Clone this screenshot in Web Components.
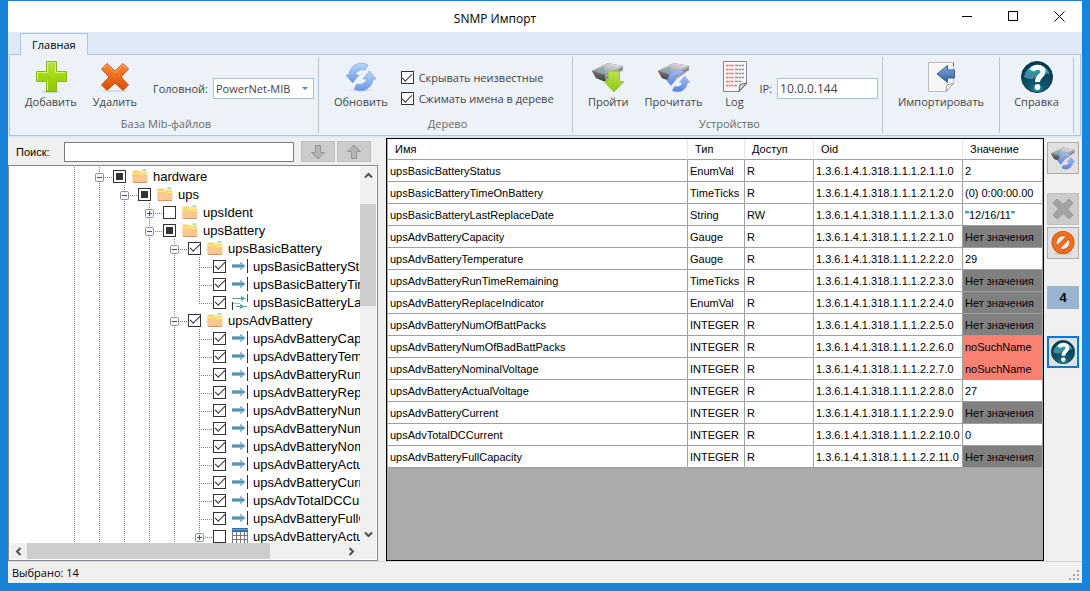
<!DOCTYPE html>
<html lang="ru">
<head>
<meta charset="utf-8">
<title>SNMP Импорт</title>
<style>
  html, body {
    height: 100%;
    margin: 0;
  }

  body {
    --ui-font: "Open Sans", "Noto Sans", sans-serif;
    --classic-font: "Liberation Sans", Arial, sans-serif;
    --accent: #1883d7;
    --face: #f0f0f0;
    --ribbon-strip: #dfe9f5;
    --ribbon-panel: #edf2f9;
    --ribbon-line: #b1c5de;
    overflow: hidden;
    font: 11px/16px var(--ui-font);
    color: #000;
  }
</style>
</head>
<body>
<app-window caption="SNMP Импорт">
  <ribbon-bar slot="ribbon" tab="Главная">
    <ribbon-group caption="База Mib-файлов" style="--group-width: 309px">
      <ribbon-button icon="plus">Добавить</ribbon-button>
      <ribbon-button icon="cross">Удалить</ribbon-button>
      <ribbon-select label="Головной:" value="PowerNet-MIB"></ribbon-select>
    </ribbon-group>
    <ribbon-group caption="Дерево" style="--group-width: 254px">
      <ribbon-button icon="refresh">Обновить</ribbon-button>
      <ribbon-checks items="Скрывать неизвестные|Сжимать имена в дереве"></ribbon-checks>
    </ribbon-group>
    <ribbon-group caption="Устройство" style="--group-width: 310px">
      <ribbon-button icon="walk">Пройти</ribbon-button>
      <ribbon-button icon="read">Прочитать</ribbon-button>
      <ribbon-button icon="log">Log</ribbon-button>
      <ribbon-text label="IP:" value="10.0.0.144"></ribbon-text>
    </ribbon-group>
    <ribbon-group centered style="--group-width: 117px">
      <ribbon-button icon="import">Импортировать</ribbon-button>
    </ribbon-group>
    <ribbon-group centered style="--group-width: 74px">
      <ribbon-button icon="help">Справка</ribbon-button>
    </ribbon-group>
  </ribbon-bar>
  <mib-browser slot="left"></mib-browser>
  <oid-grid slot="center"></oid-grid>
  <side-tools slot="right" count="4"></side-tools>
  <status-bar slot="status">Выбрано: 14</status-bar>
</app-window>

<script>
const DEVICE = `
  <path d="M0 10 L16 2 L31 5 L31 9 L14 21 L4 17 Z" fill="#777"/>
  <path d="M0 10 L16 2 L31 5 L13 14 Z" fill="url(#top)"/>
  <path d="M0 10 L13 14 L14 21 L4 17 Z" fill="url(#side)"/>
  <path d="M13 14 L31 5 L31 9 L14 21 Z" fill="#a9a9a9"/>
  <path d="M14 17 L31 7.500" stroke="#666" stroke-width="1"/>
  <path d="M7 10 L12 7 M10 11.500 L13 9.500" stroke="#4fb9c8" stroke-width="1.500"/>
`;

const DEVICE_DEFS = `
  <linearGradient id="top" x1="0" y1="1" x2="1" y2="0">
    <stop offset="0" stop-color="#7b7b7b"/><stop offset=".4" stop-color="#b0b0b0"/><stop offset="1" stop-color="#ececec"/>
  </linearGradient>
  <linearGradient id="side" x1="0" y1="0" x2="0" y2="1">
    <stop offset="0" stop-color="#777"/><stop offset="1" stop-color="#3c3c3c"/>
  </linearGradient>
`;

const ARROWS = `
  <path d="M23 4 A12.500 12.500 0 0 0 4 14 H1 L7.500 22 L14 14 H10 A8 8 0 0 1 20 9 Z" fill="url(#blue)" stroke="#6d97de" stroke-width=".6"/>
  <path d="M9 28 A12.500 12.500 0 0 0 28 18 H31 L24.500 10 L18 18 H22 A8 8 0 0 1 12 23 Z" fill="url(#blue)" stroke="#6d97de" stroke-width=".6"/>
`;

const BLUE = `
  <linearGradient id="blue" x1="0" y1="0" x2="0" y2="1">
    <stop offset="0" stop-color="#bcd8fb"/><stop offset="1" stop-color="#6b95e6"/>
  </linearGradient>
`;

const VIOLET = BLUE.replace('#bcd8fb', '#a9bdf5').replace('#6b95e6', '#5c7fe0');

const ICONS = {
  plus: [32, 32, `
    <defs><linearGradient id="g" x1="0" y1="0" x2="0" y2="1">
      <stop offset="0" stop-color="#b7e34a"/><stop offset=".5" stop-color="#a3d80d"/><stop offset="1" stop-color="#8cc60a"/>
    </linearGradient></defs>
    <ellipse cx="16" cy="31" rx="9" ry="1" fill="#c3ccd4"/>
    <path d="M11.500 .5 H21.500 V10.500 H31.500 V20.500 H21.500 V30.500 H11.500 V20.500 H1.500 V10.500 H11.500 Z" fill="url(#g)" stroke="#84b51a"/>
    <path d="M12.500 20 V29.500 M12.500 10.500 V1.500 H20.500 V11.500 H30.500 M2.500 20 V11.500 H12.500" fill="none" stroke="#d3f08a"/>`],
  cross: [32, 32, `
    <defs><linearGradient id="g" x1="0" y1="0" x2="0" y2="1">
      <stop offset="0" stop-color="#fb8a35"/><stop offset="1" stop-color="#d84c06"/>
    </linearGradient></defs>
    <ellipse cx="16" cy="30" rx="13" ry="1" fill="#d5dbe3"/>
    <path d="M8 2.500 L16 10 L24 2.500 L29.500 8 L22 16 L29.500 24 L24 29.500 L16 22 L8 29.500 L2.500 24 L10 16 L2.500 8 Z" fill="url(#g)" stroke="#cf5114" stroke-linejoin="round"/>
    <path d="M4 8 L8 4 L16 11.500 L24 4 L28 8" fill="none" stroke="#ffb27c"/>`],
  refresh: [32, 32, `<defs>${ BLUE }</defs><ellipse cx="16" cy="29.500" rx="11" ry="1" fill="#d3dce8"/>${ ARROWS }`],
  walk: [32, 32, `
    <defs>${ DEVICE_DEFS }<linearGradient id="g" x1="0" y1="0" x2="0" y2="1">
      <stop offset="0" stop-color="#bde24c"/><stop offset="1" stop-color="#8cc914"/>
    </linearGradient></defs>
    ${ DEVICE }
    <path d="M16.500 10.500 H27.500 V20.500 H32 L22 31 L12 20.500 H16.500 Z" fill="url(#g)" stroke="#9cc94a"/>`],
  read: [32, 32, `
    <defs>${ DEVICE_DEFS }${ VIOLET }</defs>
    ${ DEVICE }
    <g transform="translate(7 7) scale(.8)">${ ARROWS }</g>`],
  log: [32, 32, `
    <path d="M4.500 .5 H27.500 V23 L20 30.500 H4.500 Z" fill="#f5f5f5" stroke="#888"/>
    <path d="M7 4.500 h8 M7 8.500 h8 M7 12.500 h8 M7 16.500 h8 M7 20.500 h8 M7 24.500 h7" stroke="#eb7777" stroke-width="1.500" stroke-dasharray="2 .5"/>
    <path d="M16 4.500 h9 M16 8.500 h9 M16 12.500 h9 M16 16.500 h9 M16 20.500 h7 M15 24.500 h3" stroke="#999" stroke-width="1.500" stroke-dasharray="3 .5"/>
    <path d="M20 30.500 L21 23.500 L27.500 22 Z" fill="#ddd" stroke="#666"/>`],
  import: [32, 32, `
    <defs><linearGradient id="g" x1="0" y1="0" x2="0" y2="1">
      <stop offset="0" stop-color="#83add8"/><stop offset="1" stop-color="#345e9c"/>
    </linearGradient></defs>
    <path d="M3.500 1.500 H28.500 V22 L21 30.500 H3.500 Z" fill="#f6f6f6" stroke="#bbb"/>
    <path d="M28.500 2 V5" stroke="#555"/>
    <path d="M21 30.500 L22 24 L28.500 22.500 Z" fill="#fff" stroke="#999"/>
    <path d="M12 13 L22.500 4.500 V9 H29.500 V17 H22.500 V21.500 Z" fill="url(#g)" stroke="#3b5f93"/>`],
  help: [32, 32, `
    <defs>
      <radialGradient id="g" cx=".5" cy="1" r=".8">
        <stop offset="0" stop-color="#2f97a8"/><stop offset=".35" stop-color="#0d5a72"/><stop offset="1" stop-color="#063a50"/>
      </radialGradient>
      <linearGradient id="s" x1="0" y1="0" x2="0" y2="1">
        <stop offset="0" stop-color="#3fe0ee"/><stop offset=".5" stop-color="#2f93a6"/><stop offset="1" stop-color="#4f8496"/>
      </linearGradient>
    </defs>
    <circle cx="16" cy="16" r="15.500" fill="url(#g)" stroke="#0c3748"/>
    <path d="M3 16 A13.500 14 0 0 1 29 13 Q22 12 16 16 Q9 20 3 16 Z" fill="url(#s)"/>
    <path d="M11 9.500 C13 5 22 5 22 10.500 C22 15 16.500 15 16.500 21" fill="none" stroke="#fff" stroke-width="5"/>
    <circle cx="16.500" cy="26" r="2.900" fill="#fff"/>`],
  forbid: [24, 24, `
    <ellipse cx="12" cy="22.800" rx="9" ry="1" fill="#c9c9c9"/>
    <circle cx="12" cy="11.500" r="9" fill="#f3ece8" stroke="#c9500c" stroke-width="5"/>
    <path d="M6 17.500 L18 5.500" stroke="#c9500c" stroke-width="4.500"/>
    <circle cx="12" cy="11.500" r="9" fill="none" stroke="#f2701c" stroke-width="3.500"/>
    <path d="M6 17.500 L18 5.500" stroke="#f2701c" stroke-width="3"/>`],
  crossGray: [24, 24, `
    <path d="M6 2 L12 7.500 L18 2 L22 6 L16.500 12 L22 18 L18 22 L12 16.500 L6 22 L2 18 L7.500 12 L2 6 Z" fill="#a3a3a3" stroke="#999" stroke-linejoin="round"/>`],
  down: [16, 16, `<path d="M5.500 1.500 H10.500 V8.500 H14.500 L8 15 L1.500 8.500 H5.500 Z" fill="#b4b4b4" stroke="#949494"/>`],
  up: [16, 16, `<path d="M5.500 14.500 H10.500 V7.500 H14.500 L8 1 L1.500 7.500 H5.500 Z" fill="#b4b4b4" stroke="#949494"/>`],
  folder: [16, 14, `
    <path d="M.5 12.500 V2.500 Q.5 1.500 1.500 1.500 H6.500 L8 3.500 H15 V12.500 Z" fill="#f4d37c"/>
    <path d="M8 3 V1.500 H15.500 V4" fill="#ffe9a0"/>
    <path d="M10.500 1 H14" stroke="#55c3dd"/>
    <path d="M1 4.500 H8 L9 5.500 H15" stroke="#fff45c" fill="none"/>
    <path d="M.5 5.500 H8 L9.500 6 H15.500 V12 Q15.500 13 14.500 13 H1.500 Q.5 13 .5 12 Z" fill="#fdc890"/>
    <path d="M1 13.500 H15" stroke="#cf9667"/>`],
  leaf: [16, 16, `
    <path d="M0 6 H8 V3.500 L14 8 L8 12.500 V10 H0 Z" fill="#9bb3d4"/>
    <path d="M0 8 H12" stroke="#489aa6" stroke-width="2"/>
    <path d="M15.500 1 V15" stroke="#2b2a56"/>`],
  leafRw: [16, 16, `
    <path d="M0 4.500 H12 M4 12.500 H15" stroke="#5aa3a0"/>
    <path d="M9 2 L14 4.500 L9 7 Z M8 10 L13 12.500 L8 15 Z" fill="#56a9ab"/>
    <path d="M15.500 0 V8" stroke="#557"/><path d="M.5 8 V16" stroke="#123f3f"/><path d="M1 9.500 H8" stroke="#9bb"/>`],
  table: [16, 16, `
    <path d="M0 3 H16 V16 H0 Z" fill="#fff"/>
    <path d="M.5 3 V16 M4.500 3 V16 M8.500 3 V16 M12.500 3 V16 M15.500 3 V16 M0 7.500 H16 M0 11.500 H16 M0 15.500 H16" stroke="#777"/>
    <path d="M0 0 H16 V4 H0 Z" fill="#336bab"/><path d="M0 1.500 H16" stroke="#67a7cf"/>`],
  minus: [9, 9, `<rect x=".5" y=".5" width="8" height="8" rx="1" fill="#f7f7f7" stroke="#8e8f8f"/><path d="M2 4.500 H7" stroke="#3b4fa0"/>`],
  expand: [9, 9, `<rect x=".5" y=".5" width="8" height="8" rx="1" fill="#f7f7f7" stroke="#8e8f8f"/><path d="M2 4.500 H7 M4.500 2 V7" stroke="#3b4fa0"/>`],
  minimize: [11, 11, `<path d="M0 5.500 H10" stroke="#000"/>`],
  maximize: [11, 11, `<rect x=".5" y=".5" width="9" height="9" fill="none" stroke="#000"/>`],
  close: [11, 11, `<path d="M.5 .5 L10.500 10.500 M10.500 .5 L.5 10.500" stroke="#000"/>`],
  chevron: [9, 9, `<path d="M1 6.500 L4.500 3 L8 6.500" fill="none" stroke="#505050" stroke-width="2"/>`],
  grip: [11, 11, `<path d="M8 0h2v2h-2z M4 4h2v2h-2z M8 4h2v2h-2z M0 8h2v2h-2z M4 8h2v2h-2z M8 8h2v2h-2z" fill="#a5a5a5"/>`],
};

// Shared look of the 13px tick boxes in the ribbon and the tree
const CHECK_STYLE = `
  input[type=checkbox] {
    appearance: none;
    display: grid;
    place-items: center;
    flex: none;
    box-sizing: border-box;
    width: 13px;
    height: 13px;
    margin: 0;
    border: 1px solid #333;
    background: #fff;
  }
  input:checked::after {
    content: "";
    box-sizing: border-box;
    width: 10px;
    height: 5px;
    margin-bottom: 3px;
    border: solid #333;
    border-width: 0 0 1px 1px;
    transform: rotate(-45deg);
  }
  input:indeterminate::after {
    content: "";
    width: 7px;
    height: 7px;
    background: #333;
  }
`;

/**
 * Base class: fills the shadow root with what render() and styles() return
 */
class BaseElement extends HTMLElement {
  constructor() {
    super();
    this.shadow = this.attachShadow({ mode: 'open' });
  }

  connectedCallback() {
    this.shadow.innerHTML = `<style>${ this.styles() }</style>${ this.render() }`;
  }

  attr(name) {
    return this.getAttribute(name) || '';
  }
}

class AppIcon extends BaseElement {
  styles() {
    return `:host { display: block; flex: none; } svg { display: block; }`;
  }

  render() {
    const [width, height, body] = ICONS[this.attr('name')];
    const size = Number(this.attr('size'));
    const w = size || width;
    const h = size ? size * height / width : height;
    return `<svg width="${ w }" height="${ h }" viewBox="0 0 ${ width } ${ height }" aria-hidden="true">${ body }</svg>`;
  }
}

class AppWindow extends BaseElement {
  styles() {
    return `
      :host {
        display: flex;
        flex-direction: column;
        box-sizing: border-box;
        height: 100vh;
        border: 8px solid var(--accent);
        border-top-width: 1px;
        background: var(--face);
      }
      header {
        display: flex;
        align-items: center;
        height: 31px;
        padding-left: 38px;
        background: #fff;
      }
      h1 {
        flex: 1;
        margin: 0;
        padding-top: 4px;
        font-size: 12px;
        font-weight: 400;
        text-align: center;
      }
      header button {
        display: grid;
        place-items: center;
        width: 46px;
        height: 29px;
        padding: 0;
        border: 0;
        background: none;
      }
      main {
        display: flex;
        flex: 1;
        min-height: 0;
      }
    `;
  }

  render() {
    return `
      <header>
        <h1>${ this.attr('caption') }</h1>
        <button aria-label="Свернуть"><app-icon name="minimize"></app-icon></button>
        <button aria-label="Развернуть"><app-icon name="maximize"></app-icon></button>
        <button aria-label="Закрыть"><app-icon name="close"></app-icon></button>
      </header>
      <slot name="ribbon"></slot>
      <main>
        <slot name="left"></slot>
        <slot name="center"></slot>
        <slot name="right"></slot>
      </main>
      <slot name="status"></slot>
    `;
  }
}

class RibbonBar extends BaseElement {
  styles() {
    return `
      :host {
        display: block;
        flex: none;
        padding: 1px 1px 2px;
        background: var(--ribbon-strip);
      }
      .tab {
        position: relative;
        z-index: 1;
        display: block;
        height: 22px;
        margin: 0 0 -1px 11px;
        padding: 0 11px;
        border: 1px solid var(--ribbon-line);
        border-bottom: 0;
        background: var(--ribbon-panel);
        font: inherit;
        color: #000;
      }
      .panel {
        display: flex;
        box-sizing: border-box;
        height: 82px;
        padding: 2px 0;
        border: 1px solid var(--ribbon-line);
        background: var(--ribbon-panel);
      }
    `;
  }

  render() {
    return `
      <button class="tab" role="tab">${ this.attr('tab') }</button>
      <div class="panel"><slot></slot></div>
    `;
  }
}

class RibbonGroup extends BaseElement {
  styles() {
    return `
      :host {
        display: flex;
        flex-direction: column;
        flex: 0 0 var(--group-width);
        box-sizing: border-box;
        min-width: 0;
        padding: 0 4px 0 8px;
        border-right: 1px solid var(--ribbon-line);
      }
      :host([centered]) { padding: 0; }
      .items {
        display: flex;
        gap: 2px;
        height: 59px;
      }
      :host([centered]) .items { justify-content: center; }
      .caption {
        color: #6a6a6a;
        text-align: center;
      }
    `;
  }

  render() {
    return `<div class="items"><slot></slot></div><div class="caption">${ this.attr('caption') }</div>`;
  }
}

class RibbonButton extends BaseElement {
  styles() {
    return `
      :host { display: block; }
      button {
        display: flex;
        flex-direction: column;
        align-items: center;
        gap: 1px;
        min-width: 40px;
        padding: 4px 7px 0;
        border: 0;
        background: none;
        font: inherit;
        color: #444;
        white-space: nowrap;
      }
    `;
  }

  render() {
    return `<button><app-icon name="${ this.attr('icon') }"></app-icon><span><slot></slot></span></button>`;
  }
}

const FIELD_STYLE = `
  :host {
    display: flex;
    align-items: center;
    gap: 5px;
    margin-left: auto;
    padding-top: 4px;
    color: #444;
  }
  select, input {
    appearance: none;
    box-sizing: border-box;
    width: 101px;
    height: 21px;
    padding: 0 2px;
    border: 1px solid #a5c0e2;
    border-radius: 0;
    background: #fff;
    font: inherit;
    font-size: 12px;
    color: #444;
  }
`;

class RibbonSelect extends BaseElement {
  styles() {
    return `
      ${ FIELD_STYLE }
      select { font-size: 11px; }
      .box { position: relative; display: flex; }
      .box::after {
        content: "";
        position: absolute;
        right: 6px;
        top: 9px;
        border: 3px solid transparent;
        border-top-color: #5b82bd;
        border-bottom: 0;
      }
    `;
  }

  render() {
    return `
      <label for="field">${ this.attr('label') }</label>
      <span class="box"><select id="field"><option>${ this.attr('value') }</option></select></span>
    `;
  }
}

class RibbonText extends BaseElement {
  styles() {
    return FIELD_STYLE;
  }

  render() {
    return `<label for="field">${ this.attr('label') }</label><input id="field" type="text" value="${ this.attr('value') }">`;
  }
}

class RibbonChecks extends BaseElement {
  styles() {
    return `
      :host {
        display: flex;
        flex-direction: column;
        justify-content: center;
        gap: 5px;
        padding: 3px 0 0 4px;
        color: #444;
      }
      label {
        display: flex;
        align-items: center;
        gap: 5px;
        white-space: nowrap;
      }
      ${ CHECK_STYLE }
    `;
  }

  render() {
    return this.attr('items').split('|')
      .map((text) => `<label><input type="checkbox" checked>${ text }</label>`)
      .join('');
  }
}

class ScrollBar extends BaseElement {
  styles() {
    return `
      :host {
        display: grid;
        grid-template-rows: 17px 1fr 17px;
        background: var(--face);
      }
      :host([horizontal]) {
        grid-template: none / 17px 1fr 17px;
      }
      .arrow {
        display: grid;
        place-items: center;
        padding: 0;
        border: 0;
        background: none;
      }
      .inc app-icon { transform: rotate(180deg); }
      :host([horizontal]) .dec app-icon { transform: rotate(-90deg); }
      :host([horizontal]) .inc app-icon { transform: rotate(90deg); }
      .track { display: flex; flex-direction: column; }
      :host([horizontal]) .track { flex-direction: row; }
      .thumb {
        flex: 0 0 var(--thumb);
        background: #cdcdcd;
      }
      .before { flex: 0 0 var(--offset); }
    `;
  }

  render() {
    return `
      <button class="arrow dec" aria-label="Назад"><app-icon name="chevron"></app-icon></button>
      <div class="track"><div class="before"></div><div class="thumb"></div></div>
      <button class="arrow inc" aria-label="Вперёд"><app-icon name="chevron"></app-icon></button>
    `;
  }
}

// [depth, icon, state, name, branch]
const TREE = [
  [1, 'folder', 'mixed', 'hardware', 'minus'],
  [2, 'folder', 'mixed', 'ups', 'minus'],
  [3, 'folder', 'off', 'upsIdent', 'expand'],
  [3, 'folder', 'mixed', 'upsBattery', 'minus'],
  [4, 'folder', 'on', 'upsBasicBattery', 'minus'],
  [5, 'leaf', 'on', 'upsBasicBatteryStatus', ''],
  [5, 'leaf', 'on', 'upsBasicBatteryTimeOnBattery', ''],
  [5, 'leafRw', 'on', 'upsBasicBatteryLastReplaceDate', 'last'],
  [4, 'folder', 'on', 'upsAdvBattery', 'minus'],
  [5, 'leaf', 'on', 'upsAdvBatteryCapacity', ''],
  [5, 'leaf', 'on', 'upsAdvBatteryTemperature', ''],
  [5, 'leaf', 'on', 'upsAdvBatteryRunTimeRemaining', ''],
  [5, 'leaf', 'on', 'upsAdvBatteryReplaceIndicator', ''],
  [5, 'leaf', 'on', 'upsAdvBatteryNumOfBattPacks', ''],
  [5, 'leaf', 'on', 'upsAdvBatteryNumOfBadBattPacks', ''],
  [5, 'leaf', 'on', 'upsAdvBatteryNominalVoltage', ''],
  [5, 'leaf', 'on', 'upsAdvBatteryActualVoltage', ''],
  [5, 'leaf', 'on', 'upsAdvBatteryCurrent', ''],
  [5, 'leaf', 'on', 'upsAdvTotalDCCurrent', ''],
  [5, 'leaf', 'on', 'upsAdvBatteryFullCapacity', ''],
  [5, 'table', 'off', 'upsAdvBatteryActualVoltageTable', 'expand'],
];

class MibBrowser extends BaseElement {
  connectedCallback() {
    super.connectedCallback();
    this.shadow.querySelectorAll('[data-state=mixed]').forEach((box) => {
      box.indeterminate = true;
    });
  }

  styles() {
    return `
      :host {
        display: flex;
        flex-direction: column;
        flex: 0 0 370px;
        font-family: var(--classic-font);
      }
      .search {
        display: flex;
        align-items: center;
        gap: 2px;
        padding: 3px 7px 3px 8px;
        font-size: 11px;
      }
      .search label { width: 46px; }
      .search input {
        flex: 1;
        box-sizing: border-box;
        min-width: 0;
        height: 20px;
        margin-right: 5px;
        border: 1px solid #7a7a7a;
        font: inherit;
      }
      .search button {
        display: grid;
        place-items: center;
        width: 34px;
        height: 21px;
        padding: 0;
        border: 1px solid #bfbfbf;
        background: #ccc;
      }
      .tree {
        display: grid;
        grid-template: minmax(0, 1fr) 16px / minmax(0, 1fr) 16px;
        flex: 1;
        min-height: 0;
        padding: 1px;
        border: 1px solid #828790;
        background: #fff;
      }
      .rows {
        margin: 0;
        padding: 0 0 0 52px;
        overflow: hidden;
        list-style: none;
        font-size: 13px;
      }
      .row {
        display: flex;
        height: 18px;
        line-height: 19px;
        white-space: nowrap;
      }
      .guide, .branch {
        --dots: #808080 0 1px, transparent 1px 2px;
        flex: none;
        width: 25px;
        background: repeating-linear-gradient(var(--dots)) 12px 0 / 1px 100% no-repeat;
      }
      .branch {
        display: grid;
        place-items: center;
        background:
          repeating-linear-gradient(var(--dots)) 12px 0 / 1px var(--stem, 100%) no-repeat,
          repeating-linear-gradient(90deg, var(--dots)) 12px 10px / 13px 1px no-repeat;
      }
      .branch.last { --stem: 11px; }
      .branch button {
        width: 9px;
        height: 9px;
        padding: 0;
        border: 0;
        margin-top: 2px;
        background: none;
      }
      .node {
        display: flex;
        align-items: center;
        min-width: 0;
        padding-left: 1px;
      }
      .node app-icon { margin: 0 5px 0 6px; }
      .name {
        min-width: 0;
        overflow: hidden;
      }
      .corner { background: var(--face); }
      ${ CHECK_STYLE }
    `;
  }

  row([depth, icon, state, name, branch]) {
    const toggle = branch === 'minus' || branch === 'expand'
      ? `<button aria-label="Развернуть ${ name }"><app-icon name="${ branch }"></app-icon></button>`
      : '';
    return `
      <li class="row">
        ${ '<span class="guide"></span>'.repeat(depth) }
        <span class="branch ${ branch }">${ toggle }</span>
        <label class="node">
          <input type="checkbox" data-state="${ state }" ${ state === 'on' ? 'checked' : '' }>
          <app-icon name="${ icon }"></app-icon>
          <span class="name">${ name }</span>
        </label>
      </li>
    `;
  }

  render() {
    return `
      <div class="search">
        <label for="query">Поиск:</label>
        <input id="query" type="text">
        <button disabled aria-label="Найти далее"><app-icon name="down"></app-icon></button>
        <button disabled aria-label="Найти ранее"><app-icon name="up"></app-icon></button>
      </div>
      <div class="tree">
        <ul class="rows">${ TREE.map(this.row).join('') }</ul>
        <scroll-bar style="--offset: 20px; --thumb: 102px"></scroll-bar>
        <scroll-bar horizontal style="--offset: 0px; --thumb: 243px"></scroll-bar>
        <div class="corner"></div>
      </div>
    `;
  }
}

const NO_VALUE = 'Нет значения';
const OIDS = [
  ['upsBasicBatteryStatus', 'EnumVal', 'R', '1.1.0', '2'],
  ['upsBasicBatteryTimeOnBattery', 'TimeTicks', 'R', '1.2.0', '(0) 0:00:00.00'],
  ['upsBasicBatteryLastReplaceDate', 'String', 'RW', '1.3.0', '"12/16/11"'],
  ['upsAdvBatteryCapacity', 'Gauge', 'R', '2.1.0', NO_VALUE],
  ['upsAdvBatteryTemperature', 'Gauge', 'R', '2.2.0', '29'],
  ['upsAdvBatteryRunTimeRemaining', 'TimeTicks', 'R', '2.3.0', NO_VALUE],
  ['upsAdvBatteryReplaceIndicator', 'EnumVal', 'R', '2.4.0', NO_VALUE],
  ['upsAdvBatteryNumOfBattPacks', 'INTEGER', 'R', '2.5.0', NO_VALUE],
  ['upsAdvBatteryNumOfBadBattPacks', 'INTEGER', 'R', '2.6.0', 'noSuchName'],
  ['upsAdvBatteryNominalVoltage', 'INTEGER', 'R', '2.7.0', 'noSuchName'],
  ['upsAdvBatteryActualVoltage', 'INTEGER', 'R', '2.8.0', '27'],
  ['upsAdvBatteryCurrent', 'INTEGER', 'R', '2.9.0', NO_VALUE],
  ['upsAdvTotalDCCurrent', 'INTEGER', 'R', '2.10.0', '0'],
  ['upsAdvBatteryFullCapacity', 'INTEGER', 'R', '2.11.0', NO_VALUE],
];

class OidGrid extends BaseElement {
  styles() {
    return `
      :host {
        display: block;
        flex: 1;
        box-sizing: border-box;
        min-width: 0;
        margin-left: 8px;
        padding-left: 1px;
        border: 1px solid #000;
        background: #ababab;
        font: 11px/16px var(--classic-font);
      }
      table {
        width: 100%;
        table-layout: fixed;
        border-collapse: separate;
        border-spacing: 0;
      }
      th, td {
        box-sizing: border-box;
        height: 22px;
        padding: 0 0 0 2px;
        border: solid #a0a0a0;
        border-width: 0 1px 1px 0;
        background: #fff;
        text-align: left;
        white-space: nowrap;
      }
      th {
        height: 21px;
        padding-left: 7px;
        border-right-color: #e5e5e5;
        font-weight: 400;
      }
      .type { width: 57px; }
      .access { width: 69px; }
      .oid { width: 149px; }
      .value { width: 80px; }
      td.none { background: #808080; }
      td.error { background: #fa8072; border-color: #fa8072; border-right-color: #a0a0a0; }
    `;
  }

  row([name, type, access, oid, value]) {
    const state = value === NO_VALUE ? 'none' : value === 'noSuchName' ? 'error' : '';
    return `
      <tr>
        <td>${ name }</td><td>${ type }</td><td>${ access }</td>
        <td>1.3.6.1.4.1.318.1.1.1.2.${ oid }</td><td class="${ state }">${ value }</td>
      </tr>
    `;
  }

  render() {
    return `
      <table>
        <thead>
          <tr>
            <th>Имя</th><th class="type">Тип</th><th class="access">Доступ</th>
            <th class="oid">Oid</th><th class="value">Значение</th>
          </tr>
        </thead>
        <tbody>${ OIDS.map(this.row).join('') }</tbody>
      </table>
    `;
  }
}

class SideTools extends BaseElement {
  styles() {
    return `
      :host {
        display: flex;
        flex-direction: column;
        flex: none;
        padding: 4px 3px 0;
      }
      button {
        display: grid;
        place-items: center;
        box-sizing: border-box;
        width: 32px;
        height: 32px;
        padding: 0;
        border: 1px solid #adadad;
        background: #e1e1e1;
      }
      .delete {
        margin: 19px 0 2px;
        border-color: #bfbfbf;
        background: #ccc;
      }
      .help { border: 2px solid #0078d7; }
      output {
        margin: 27px 0;
        background: #99b4d1;
        font: bold 13px/23px var(--classic-font);
        text-align: center;
      }
    `;
  }

  render() {
    return `
      <button aria-label="Прочитать"><app-icon name="read" size="24"></app-icon></button>
      <button class="delete" disabled aria-label="Удалить"><app-icon name="crossGray"></app-icon></button>
      <button aria-label="Остановить"><app-icon name="forbid"></app-icon></button>
      <output>${ this.attr('count') }</output>
      <button class="help" aria-label="Справка"><app-icon name="help" size="24"></app-icon></button>
    `;
  }
}

class StatusBar extends BaseElement {
  styles() {
    return `
      :host {
        display: flex;
        justify-content: space-between;
        align-items: center;
        flex: none;
        height: 21px;
        padding: 0 2px 0 4px;
        border-top: 1px solid #d7d7d7;
      }
      app-icon { align-self: flex-end; padding-bottom: 2px; }
    `;
  }

  render() {
    return `<span><slot></slot></span><app-icon name="grip"></app-icon>`;
  }
}

customElements.define('app-icon', AppIcon);
customElements.define('scroll-bar', ScrollBar);
customElements.define('ribbon-button', RibbonButton);
customElements.define('ribbon-select', RibbonSelect);
customElements.define('ribbon-text', RibbonText);
customElements.define('ribbon-checks', RibbonChecks);
customElements.define('ribbon-group', RibbonGroup);
customElements.define('ribbon-bar', RibbonBar);
customElements.define('mib-browser', MibBrowser);
customElements.define('oid-grid', OidGrid);
customElements.define('side-tools', SideTools);
customElements.define('status-bar', StatusBar);
customElements.define('app-window', AppWindow);
</script>
</body>
</html>
